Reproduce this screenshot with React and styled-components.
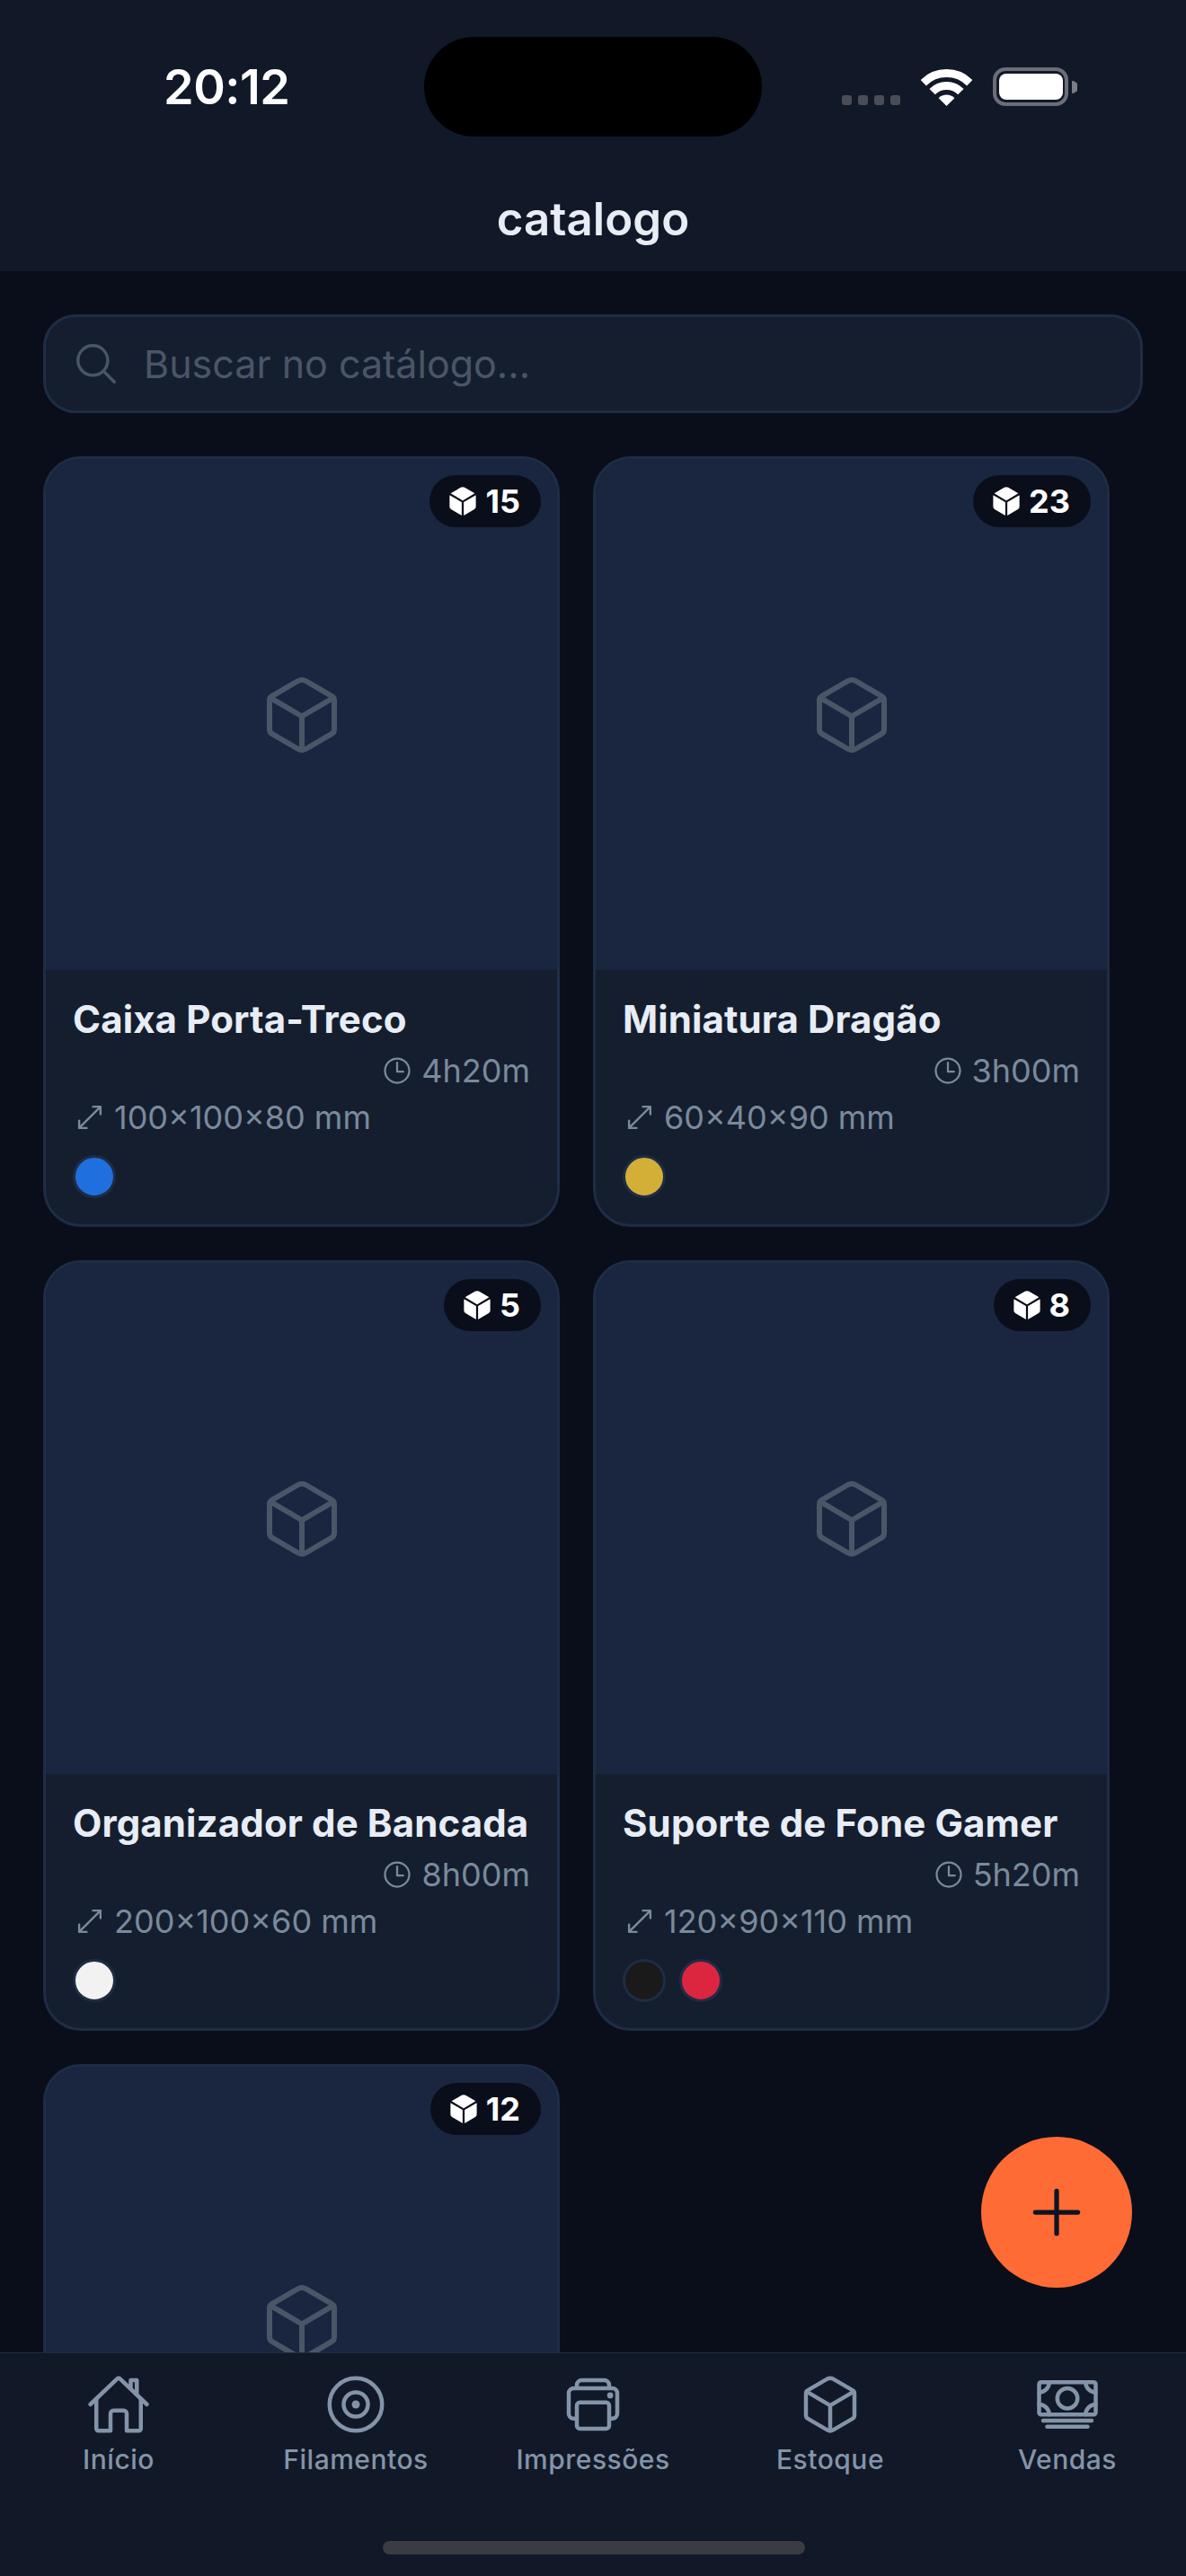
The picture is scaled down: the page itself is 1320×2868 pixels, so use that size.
import React from "react";
import styled, { createGlobalStyle } from "styled-components";
import {
  IoAdd,
  IoCashOutline,
  IoCube,
  IoCubeOutline,
  IoDiscOutline,
  IoHomeOutline,
  IoPrintOutline,
  IoResizeOutline,
  IoSearchOutline,
  IoTimeOutline,
} from "react-icons/io5";

const GlobalStyle = createGlobalStyle`
  html, body {
    margin: 0;
    padding: 0;
    background: #0a0e1a;
  }
  * {
    box-sizing: border-box;
  }
`;

const Screen = styled.div`
  position: relative;
  display: flex;
  flex-direction: column;
  width: 1320px;
  height: 2868px;
  overflow: hidden;
  background: #0a0e1a;
  font-family: Inter, "Liberation Sans", sans-serif;
`;

// Header with status bar
const Header = styled.header`
  flex: none;
  height: 302px;
  background: #111827;
`;

const StatusBar = styled.div`
  display: flex;
  padding-top: 41px;
  height: 152px;
`;

const Clock = styled.div`
  width: 472px;
  padding-left: 182px;
  font-size: 54px;
  font-weight: 600;
  line-height: 111px;
  letter-spacing: -0.5px;
  color: #fff;
`;

const Island = styled.div`
  width: 376px;
  height: 111px;
  border-radius: 56px;
  background: #000;
`;

const StatusIcons = styled.div`
  display: flex;
  align-items: flex-end;
  gap: 23px;
  height: 77px;
  padding-left: 89px;
`;

const SignalDots = styled.div`
  display: flex;
  gap: 7px;
  margin-bottom: 1px;
`;

const SignalDot = styled.span`
  width: 11px;
  height: 11px;
  border-radius: 3px;
  background: #4a4d57;
`;

const Title = styled.h1`
  margin: 0;
  padding-top: 62px;
  font-size: 51px;
  font-weight: 600;
  line-height: 60px;
  text-align: center;
  color: #e8edf5;
`;

const Content = styled.main`
  flex: 1;
  min-height: 0;
  overflow: hidden;
  padding: 48px 48px 0;
`;

const SearchBar = styled.div`
  display: flex;
  align-items: center;
  gap: 26px;
  height: 110px;
  margin-bottom: 48px;
  padding: 0 29px;
  border: 3px solid #1e2d45;
  border-radius: 36px;
  background: #151e2e;
  color: #4a5568;
`;

const SearchText = styled.span`
  font-size: 43px;
  line-height: 54px;
`;

const Grid = styled.div`
  display: grid;
  grid-template-columns: 575px 575px;
  column-gap: 37px;
  row-gap: 37px;
`;

const Card = styled.article`
  overflow: hidden;
  border: 3px solid #1e2d45;
  border-radius: 42px;
  background: #151e2e;
`;

const Thumb = styled.div`
  position: relative;
  display: flex;
  align-items: center;
  justify-content: center;
  height: 569px;
  background: #1a2640;
  color: #4a5568;
`;

const Badge = styled.div`
  position: absolute;
  top: 18px;
  right: 18px;
  display: flex;
  align-items: center;
  gap: 7px;
  height: 58px;
  padding: 0 23px 0 19px;
  border-radius: 29px;
  background: #0a0e1a;
  font-size: 36px;
  font-weight: 700;
  color: #fff;
`;

const Info = styled.div`
  display: flex;
  flex-direction: column;
  height: 283px;
  padding: 30px 30px 0;
`;

const Name = styled.h2`
  margin: 0;
  font-size: 42px;
  font-weight: 700;
  line-height: 50px;
  letter-spacing: 0.12px;
  white-space: nowrap;
  color: #e8edf5;
`;

const Meta = styled.div`
  display: flex;
  align-items: center;
  align-self: ${(p) => (p.$end ? "flex-end" : "flex-start")};
  gap: ${(p) => (p.$end ? "9px" : "8px")};
  height: 52px;
  margin-top: ${(p) => (p.$end ? "6px" : "0")};
  font-size: 36px;
  color: #7a8a9c;
`;

const Swatches = styled.div`
  display: flex;
  gap: 15px;
  margin-top: 16px;
`;

const Swatch = styled.span`
  width: 48px;
  height: 48px;
  border: 3px solid #1e2d45;
  border-radius: 50%;
  background: ${(p) => p.$color};
`;

const Fab = styled.button`
  position: absolute;
  left: 1092px;
  top: 2379px;
  display: flex;
  align-items: center;
  justify-content: center;
  width: 168px;
  height: 168px;
  padding: 0;
  border: none;
  border-radius: 50%;
  background: #ff6b35;
  color: #0d1420;
`;

const TabBar = styled.nav`
  position: relative;
  flex: none;
  display: flex;
  height: 249px;
  padding-top: 21px;
  border-top: 1px solid #1e2d45;
  background: #111827;
`;

const Tab = styled.div`
  flex: 1;
  display: flex;
  flex-direction: column;
  align-items: center;
  gap: 7px;
  color: #8494a8;
`;

const TabLabel = styled.span`
  font-size: 30px;
  font-weight: 500;
  line-height: 36px;
  letter-spacing: 0.5px;
`;

const HomeIndicator = styled.div`
  position: absolute;
  left: 426px;
  bottom: 24px;
  width: 470px;
  height: 15px;
  border-radius: 8px;
  background: #3a3c42;
`;

const WifiIcon = () => (
  <svg width="57" height="41" viewBox="0 0 57 41" fill="none">
    <path d="M2.7 15.3a36.5 36.5 0 0 1 51.6 0" stroke="#fff" strokeWidth="9" />
    <path d="M12.6 25.1a22.5 22.5 0 0 1 31.8 0" stroke="#fff" strokeWidth="9" />
    <path d="M19.6 32.2a12.5 12.5 0 0 1 17.8 0L28.5 41Z" fill="#fff" />
  </svg>
);

const BatteryIcon = () => (
  <svg width="94" height="43" viewBox="0 0 94 43" fill="none">
    <rect x="2" y="2" width="80" height="39" rx="12" stroke="#6b6e78" strokeWidth="4" />
    <rect x="7" y="7" width="71" height="29" rx="8" fill="#fff" />
    <path d="M88 15a7 7 0 0 1 0 14Z" fill="#7a7d86" />
  </svg>
);

const products = [
  { name: "Caixa Porta-Treco", time: "4h20m", size: "100×100×80 mm", stock: 15, colors: ["#1f6fde"] },
  { name: "Miniatura Dragão", time: "3h00m", size: "60×40×90 mm", stock: 23, colors: ["#d4af37"] },
  { name: "Organizador de Bancada", time: "8h00m", size: "200×100×60 mm", stock: 5, colors: ["#f2f2f2"] },
  { name: "Suporte de Fone Gamer", time: "5h20m", size: "120×90×110 mm", stock: 8, colors: ["#1a1a1a", "#dc2640"] },
  { stock: 12 },
];

const tabs = [
  { label: "Início", Icon: IoHomeOutline },
  { label: "Filamentos", Icon: IoDiscOutline },
  { label: "Impressões", Icon: IoPrintOutline },
  { label: "Estoque", Icon: IoCubeOutline },
  { label: "Vendas", Icon: IoCashOutline },
];

const ProductCard = ({ name, time, size, stock, colors }) => (
  <Card>
    <Thumb>
      <IoCubeOutline size={96} />
      <Badge>
        <IoCube size={36} />
        {stock}
      </Badge>
    </Thumb>
    {name && (
      <Info>
        <Name>{name}</Name>
        <Meta $end>
          <IoTimeOutline size={36} />
          {time}
        </Meta>
        <Meta>
          <IoResizeOutline size={38} />
          {size}
        </Meta>
        <Swatches>
          {colors.map((c) => (
            <Swatch key={c} $color={c} />
          ))}
        </Swatches>
      </Info>
    )}
  </Card>
);

export default function App() {
  return (
    <Screen>
      <GlobalStyle />
      <Header>
        <StatusBar>
          <Clock>20:12</Clock>
          <Island />
          <StatusIcons>
            <SignalDots>
              <SignalDot />
              <SignalDot />
              <SignalDot />
              <SignalDot />
            </SignalDots>
            <WifiIcon />
            <BatteryIcon />
          </StatusIcons>
        </StatusBar>
        <Title>catalogo</Title>
      </Header>
      <Content>
        <SearchBar>
          <IoSearchOutline size={54} />
          <SearchText>Buscar no catálogo...</SearchText>
        </SearchBar>
        <Grid>
          {products.map((p) => (
            <ProductCard key={p.stock} {...p} />
          ))}
        </Grid>
      </Content>
      <Fab>
        <IoAdd size={84} />
      </Fab>
      <TabBar>
        {tabs.map(({ label, Icon }) => (
          <Tab key={label}>
            <Icon size={72} />
            <TabLabel>{label}</TabLabel>
          </Tab>
        ))}
        <HomeIndicator />
      </TabBar>
    </Screen>
  );
}
